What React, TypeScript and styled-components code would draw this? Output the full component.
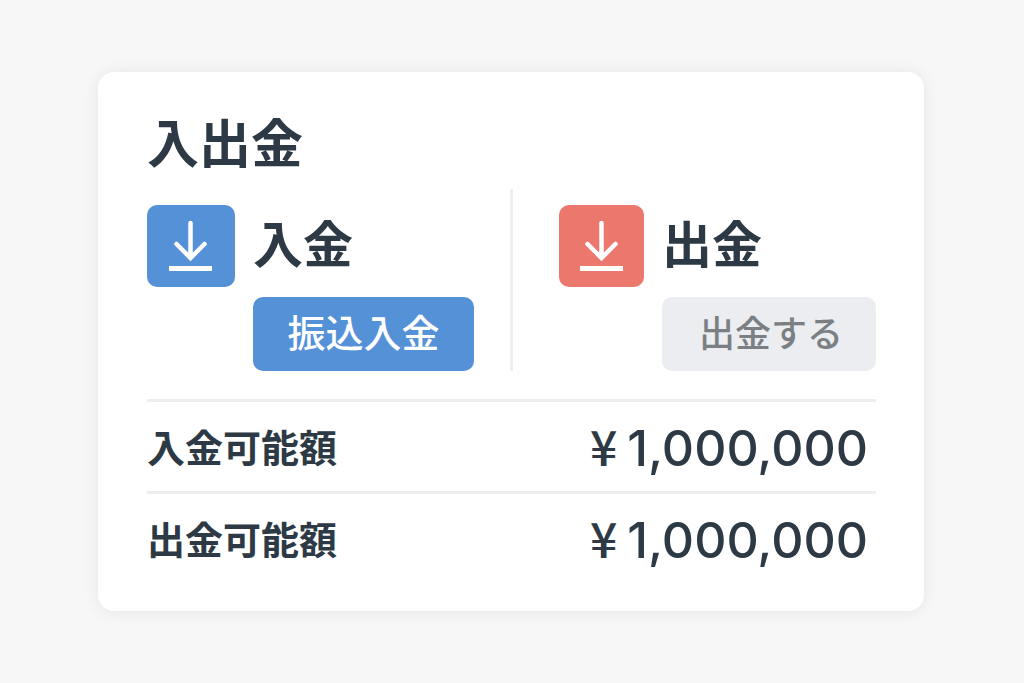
import React from 'react';
import styled, { createGlobalStyle } from 'styled-components';

const GlobalStyle = createGlobalStyle`
  *, *::before, *::after { box-sizing: border-box; }
  body {
    margin: 0;
    background: #f7f7f7;
    color: #2d3a45;
    font-family: "Noto Sans CJK JP", sans-serif;
  }
`;

const Page = styled.main`
  min-height: 100vh;
  padding: 72px 100px 72px 98px;
`;

const Card = styled.section`
  padding: 37px 48px 28px 49px;
  border-radius: 16px;
  background: #ffffff;
  box-shadow: 0 1px 16px rgba(0, 0, 0, 0.08);
`;

const Title = styled.h1`
  margin: 0;
  font-size: 52px;
  line-height: 64px;
  font-weight: 700;
`;

const Actions = styled.div`
  display: grid;
  grid-template-columns: 366fr 363fr;
  margin-top: 16px;
`;

const Action = styled.section<{ $divided?: boolean }>`
  display: grid;
  grid-template-columns: auto 1fr;
  grid-template-rows: 82px 74px;
  column-gap: 18px;
  row-gap: 10px;
  padding: ${(p) => (p.$divided ? '16px 36px 0 0' : '16px 0 0 46px')};
  border-right: ${(p) => (p.$divided ? '3px solid #eeeeef' : '0')};
`;

const IconTile = styled.span<{ $color: string; $width: number }>`
  display: flex;
  justify-content: center;
  width: ${(p) => p.$width}px;
  border-radius: 10px;
  background: ${(p) => p.$color};
`;

const ActionTitle = styled.h2`
  margin: 0;
  font-size: 50px;
  line-height: 72px;
  font-weight: 700;
`;

const ActionButton = styled.button<{ $muted?: boolean }>`
  grid-column: 2;
  border: 0;
  border-radius: 10px;
  padding: ${(p) => (p.$muted ? '0 0 6px 4px' : '0 0 8px')};
  background: ${(p) => (p.$muted ? '#ebedf0' : '#5591d7')};
  color: ${(p) => (p.$muted ? '#7a7f84' : '#ffffff')};
  font-family: inherit;
  font-size: ${(p) => (p.$muted ? '36px' : '38px')};
  font-weight: 500;
  cursor: pointer;
`;

const Limits = styled.dl`
  margin: 28px 0 0;
`;

const LimitRow = styled.div`
  display: flex;
  align-items: center;
  justify-content: space-between;
  height: 92px;
  padding-right: 8px;
  border-top: 3px solid #eeeeef;
`;

const LimitName = styled.dt`
  padding-bottom: 2px;
  font-size: 38px;
  line-height: 56px;
  font-weight: 700;
`;

const Amount = styled.dd`
  display: flex;
  align-items: baseline;
  gap: 10px;
  margin: 0;
  font-family: Inter, sans-serif;
  font-size: 50px;
  line-height: 60px;
  font-weight: 500;
`;

const Currency = styled.span`
  font-family: "Noto Sans CJK JP", sans-serif;
  font-size: 48px;
`;

function ArrowIcon() {
  return (
    <svg width="84" height="82" viewBox="0 0 84 82" fill="none" stroke="#fff" aria-hidden="true">
      <path d="M41.5 18V53M27.5 39L41.5 53L55.5 39" strokeWidth="4.5" strokeLinecap="round" />
      <path d="M20 63.5H63" strokeWidth="5" />
    </svg>
  );
}

export default function App() {
  return (
    <>
      <GlobalStyle />
      <Page>
        <Card>
          <Title>入出金</Title>
          <Actions>
            <Action $divided>
              <IconTile $color="#5591d7" $width={88}><ArrowIcon /></IconTile>
              <ActionTitle>入金</ActionTitle>
              <ActionButton type="button">振込入金</ActionButton>
            </Action>
            <Action>
              <IconTile $color="#eb776d" $width={85}><ArrowIcon /></IconTile>
              <ActionTitle>出金</ActionTitle>
              <ActionButton type="button" $muted>出金する</ActionButton>
            </Action>
          </Actions>
          <Limits>
            <LimitRow>
              <LimitName>入金可能額</LimitName>
              <Amount><Currency>¥</Currency><span>1,000,000</span></Amount>
            </LimitRow>
            <LimitRow>
              <LimitName>出金可能額</LimitName>
              <Amount><Currency>¥</Currency><span>1,000,000</span></Amount>
            </LimitRow>
          </Limits>
        </Card>
      </Page>
    </>
  );
}
